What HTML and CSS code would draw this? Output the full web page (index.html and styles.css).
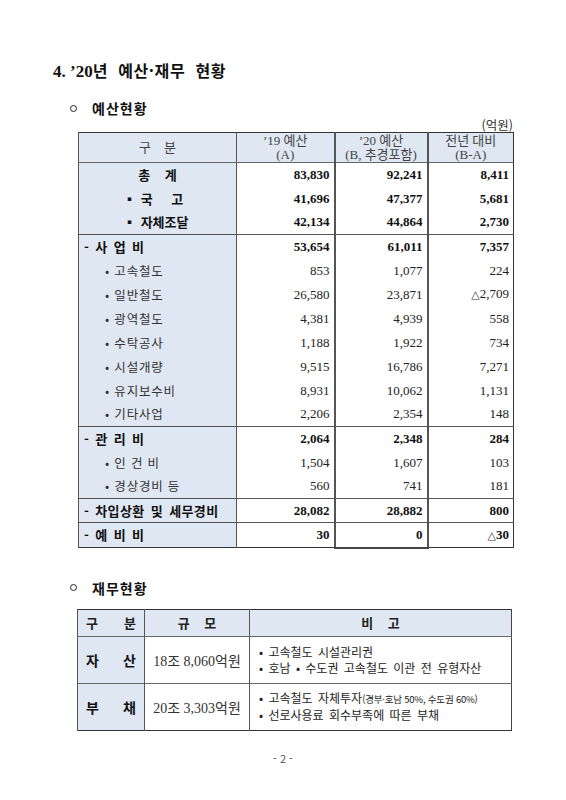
FILE: index.html
```html
<!DOCTYPE html>
<html lang="ko">
<head>
    <meta charset="UTF-8">
    <meta name="viewport" content="width=device-width, initial-scale=1.0">
    <title>'20년 예산·재무 현황</title>
    <link rel="stylesheet" href="styles.css">
</head>
<body>
    <div class="page">
        <h1 class="title"><span class="num">4. ’20</span>년&nbsp; 예산·재무&nbsp; 현황</h1>

        <h2 class="section"><span class="ring"></span>예산현황</h2>
        <div class="unit">(억원)</div>
        <table class="budget">
            <colgroup>
                <col class="c-label">
                <col class="c-a">
                <col class="c-b">
                <col class="c-diff">
            </colgroup>
            <thead>
                <tr>
                    <th class="pre">구    분</th>
                    <th>’19 예산<br>(A)</th>
                    <th class="col-b">’20 예산<br>(B, 추경포함)</th>
                    <th>전년 대비<br>(B-A)</th>
                </tr>
            </thead>
            <tbody>
                <tr class="bold">
                    <td class="label total pre">총    계</td>
                    <td>83,830</td><td class="col-b">92,241</td><td>8,411</td>
                </tr>
                <tr class="bold">
                    <td class="label sq pre">▪ 국    고</td>
                    <td>41,696</td><td class="col-b">47,377</td><td>5,681</td>
                </tr>
                <tr class="bold">
                    <td class="label sq">▪ 자체조달</td>
                    <td>42,134</td><td class="col-b">44,864</td><td>2,730</td>
                </tr>
            </tbody>
            <tbody>
                <tr class="bold">
                    <td class="label dash">- 사 업 비</td>
                    <td>53,654</td><td class="col-b">61,011</td><td>7,357</td>
                </tr>
                <tr>
                    <td class="label dot">• 고속철도</td>
                    <td>853</td><td class="col-b">1,077</td><td>224</td>
                </tr>
                <tr>
                    <td class="label dot">• 일반철도</td>
                    <td>26,580</td><td class="col-b">23,871</td><td><span class="tri">△</span>2,709</td>
                </tr>
                <tr>
                    <td class="label dot">• 광역철도</td>
                    <td>4,381</td><td class="col-b">4,939</td><td>558</td>
                </tr>
                <tr>
                    <td class="label dot">• 수탁공사</td>
                    <td>1,188</td><td class="col-b">1,922</td><td>734</td>
                </tr>
                <tr>
                    <td class="label dot">• 시설개량</td>
                    <td>9,515</td><td class="col-b">16,786</td><td>7,271</td>
                </tr>
                <tr>
                    <td class="label dot">• 유지보수비</td>
                    <td>8,931</td><td class="col-b">10,062</td><td>1,131</td>
                </tr>
                <tr>
                    <td class="label dot">• 기타사업</td>
                    <td>2,206</td><td class="col-b">2,354</td><td>148</td>
                </tr>
            </tbody>
            <tbody>
                <tr class="bold">
                    <td class="label dash">- 관 리 비</td>
                    <td>2,064</td><td class="col-b">2,348</td><td>284</td>
                </tr>
                <tr>
                    <td class="label dot">• 인 건 비</td>
                    <td>1,504</td><td class="col-b">1,607</td><td>103</td>
                </tr>
                <tr>
                    <td class="label dot">• 경상경비 등</td>
                    <td>560</td><td class="col-b">741</td><td>181</td>
                </tr>
            </tbody>
            <tbody>
                <tr class="bold">
                    <td class="label dash">- 차입상환 및 세무경비</td>
                    <td>28,082</td><td class="col-b">28,882</td><td>800</td>
                </tr>
            </tbody>
            <tbody>
                <tr class="bold last">
                    <td class="label dash">- 예 비 비</td>
                    <td>30</td><td class="col-b">0</td><td><span class="tri">△</span>30</td>
                </tr>
            </tbody>
        </table>

        <h2 class="section section-2"><span class="ring"></span>재무현황</h2>
        <table class="finance">
            <colgroup>
                <col class="f-label">
                <col class="f-size">
                <col class="f-note">
            </colgroup>
            <thead>
                <tr>
                    <th><span class="spread">구<i></i>분</span></th>
                    <th class="pre">규    모</th>
                    <th class="pre">비    고</th>
                </tr>
            </thead>
            <tbody>
                <tr>
                    <td class="f-head"><span class="spread">자<i></i>산</span></td>
                    <td class="amount">18조 8,060억원</td>
                    <td class="note">
                        <div>• 고속철도 시설관리권</div>
                        <div>• 호남 • 수도권 고속철도 이관 전 유형자산</div>
                    </td>
                </tr>
                <tr>
                    <td class="f-head"><span class="spread">부<i></i>채</span></td>
                    <td class="amount">20조 3,303억원</td>
                    <td class="note">
                        <div>• 고속철도 자체투자<small>(경부·호남 50%, 수도권 60%)</small></div>
                        <div>• 선로사용료 회수부족에 따른 부채</div>
                    </td>
                </tr>
            </tbody>
        </table>

        <div class="page-num">- 2 -</div>
    </div>
</body>
</html>
```

FILE: styles.css
```css
* {
    margin: 0;
    padding: 0;
    box-sizing: border-box;
}

body {
    font-family: "Liberation Serif", "Noto Sans CJK KR", serif;
    background: #fff;
    color: #111;
}

.page {
    width: 566px;
    height: 800px;
    padding-top: 58px;
}

.pre {
    white-space: pre;
}

/* Headings */
.title {
    margin-left: 53px;
    font-family: "Noto Sans CJK KR", sans-serif;
    font-size: 16px;
    line-height: 24px;
    font-weight: 700;
    letter-spacing: 0.6px;
}

.title .num {
    font-family: "Liberation Serif", serif;
    font-size: 17px;
    letter-spacing: 0;
}

.section {
    display: flex;
    align-items: center;
    margin: 14px 0 0 70px;
    font-family: "Noto Sans CJK KR", sans-serif;
    font-size: 14px;
    line-height: 20px;
    font-weight: 700;
    letter-spacing: 1px;
}

.section-2 {
    margin-top: 29px;
}

.ring {
    width: 7px;
    height: 7px;
    border: 1.2px solid #222;
    border-radius: 50%;
    margin-right: 15px;
}

.unit {
    width: 435px;
    margin-left: 78px;
    text-align: right;
    font-family: "Noto Sans CJK KR", sans-serif;
    font-size: 12.5px;
    line-height: 14px;
    color: #333;
}

/* Budget table */
.budget {
    margin-left: 78px;
    width: 435px;
    border-collapse: collapse;
    table-layout: fixed;
    border: 1px solid #333;
}

.c-label { width: 158px; }
.c-a { width: 98px; }
.c-b { width: 93px; }
.c-diff { width: 86px; }

.budget th {
    height: 30px;
    font-weight: 400;
    font-size: 13px;
    line-height: 14px;
    color: #444;
    background: #dfe7f2;
    border-bottom: 1px solid #666;
    border-left: 1px solid #555;
    vertical-align: middle;
    text-align: center;
}

.budget tbody {
    border-top: 1px solid #555;
}

.budget td {
    height: 24px;
    padding: 0 4px 0 0;
    font-size: 13px;
    line-height: 16px;
    text-align: right;
    color: #222;
    border-left: 1px solid #555;
    vertical-align: middle;
}

.budget tr.last td {
    height: 25px;
}

.budget .col-b {
    border-left: 2px solid #555;
    border-right: 2px solid #555;
}

.budget tr.last .col-b {
    border-bottom: 2px solid #444;
}

.budget td.label {
    background: #dfe7f2;
    text-align: left;
    font-family: "Noto Sans CJK KR", sans-serif;
    font-size: 12.5px;
    color: #333;
    padding: 0;
}

.budget tr.bold td {
    font-weight: 700;
    color: #111;
}

.budget tr.bold td.label {
    font-size: 13px;
    color: #111;
}

.budget td.total {
    text-align: center;
}

.budget td.sq {
    padding-left: 44px;
    word-spacing: 1px;
}

.budget td.dash {
    padding-left: 5px;
    word-spacing: 2px;
    letter-spacing: 0.4px;
}

.budget td.dot {
    padding-left: 26px;
    letter-spacing: 0.8px;
}

.tri {
    font-weight: 400;
    font-family: "DejaVu Sans", sans-serif;
    font-size: 11px;
    color: #333;
}

/* Finance table */
.finance {
    margin: 11px 0 0 77px;
    width: 434px;
    border-collapse: collapse;
    table-layout: fixed;
    border-top: 1px solid #333;
    border-bottom: 1.5px solid #333;
    border-left: 1px solid #444;
    border-right: 1px solid #444;
}

.f-label { width: 67px; }
.f-size { width: 105px; }
.f-note { width: 262px; }

.finance th {
    height: 27px;
    background: #dfe7f2;
    font-family: "Noto Sans CJK KR", sans-serif;
    font-size: 13px;
    font-weight: 700;
    color: #222;
    border-left: 1px solid #555;
    border-bottom: 1px solid #666;
    text-align: center;
    vertical-align: middle;
}

.finance td {
    height: 47px;
    border-left: 1px solid #555;
    border-top: 1px solid #666;
    vertical-align: middle;
}

.spread {
    display: flex;
    justify-content: space-between;
    padding: 0 8px;
}

.f-head {
    background: #dfe7f2;
    font-family: "Noto Sans CJK KR", sans-serif;
    font-size: 14px;
    font-weight: 700;
    color: #111;
}

.amount {
    text-align: center;
    font-size: 14px;
    color: #333;
}

.note {
    padding-left: 9px;
    font-family: "Noto Sans CJK KR", sans-serif;
    font-size: 12px;
    line-height: 16px;
    color: #222;
    word-spacing: 2px;
}

.note small {
    font-size: 9.5px;
    word-spacing: 0;
    letter-spacing: -0.2px;
}

.page-num {
    margin-top: 20px;
    text-align: center;
    font-family: "Noto Sans CJK KR", sans-serif;
    font-size: 11px;
    line-height: 14px;
    color: #555;
}
```
